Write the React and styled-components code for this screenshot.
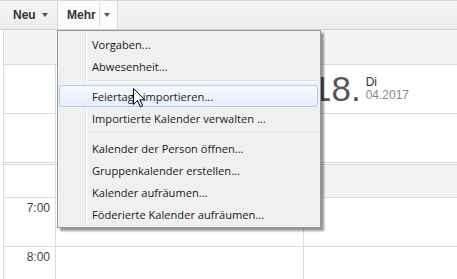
import React from "react";
import styled, { createGlobalStyle } from "styled-components";

const GlobalStyle = createGlobalStyle`
  html, body {
    margin: 0;
    padding: 0;
    background: #fff;
  }
  * {
    box-sizing: border-box;
  }
`;

const MENU_GROUPS = [
  ["Vorgaben...", "Abwesenheit..."],
  ["Feiertage importieren...", "Importierte Kalender verwalten ..."],
  [
    "Kalender der Person öffnen...",
    "Gruppenkalender erstellen...",
    "Kalender aufräumen...",
    "Föderierte Kalender aufräumen...",
  ],
];

const HOVERED = "Feiertage importieren...";

const ROWS = [
  { key: "date", height: 49 },
  { key: "allday", height: 51, double: true },
  { key: "h6", height: 33, shade: true },
  { key: "h7", height: 49, label: "7:00" },
  { key: "h8", height: 49, label: "8:00" },
];

const App = () => {
  return (
    <Page>
      <GlobalStyle />
      <Toolbar>
        <ToolButton>
          <ButtonLabel>Neu</ButtonLabel>
          <Caret />
        </ToolButton>
        <SplitButton>
          <ButtonLabel>Mehr</ButtonLabel>
          <SplitDivider />
          <CaretBox>
            <Caret />
          </CaretBox>
        </SplitButton>
      </Toolbar>

      <Calendar>
        <HeaderBar />
        <Grid>
          {ROWS.map((row) => (
            <React.Fragment key={row.key}>
              <Cell $height={row.height} $double={row.double}>
                {row.label && <TimeLabel>{row.label}</TimeLabel>}
              </Cell>
              <Cell $height={row.height} $double={row.double} />
              <Cell
                $height={row.height}
                $double={row.double}
                $shade={row.shade}
                $last
              >
                {row.key === "date" && (
                  <DateHead>
                    <DayNumber>18.</DayNumber>
                    <DateMeta>
                      <Weekday>Di</Weekday>
                      <MonthYear>04.2017</MonthYear>
                    </DateMeta>
                  </DateHead>
                )}
              </Cell>
            </React.Fragment>
          ))}
        </Grid>
      </Calendar>

      <Menu>
        {MENU_GROUPS.map((group, gi) => (
          <React.Fragment key={gi}>
            {gi > 0 && <Separator />}
            {group.map((item) => (
              <MenuItem key={item} $hover={item === HOVERED}>
                {item}
              </MenuItem>
            ))}
          </React.Fragment>
        ))}
      </Menu>

      <Pointer width="13" height="20" viewBox="0 0 13 20">
        <path
          d="M0.5 0.5 V16.5 L4.5 12.7 L7.3 18.8 L9.6 17.8 L6.9 11.8 H11.8 Z"
          fill="#fff"
          stroke="#000"
          strokeWidth="1"
          strokeLinejoin="miter"
        />
      </Pointer>
    </Page>
  );
};

const Page = styled.div`
  position: relative;
  width: 457px;
  height: 279px;
  overflow: hidden;
  background: #fff;
  font-family: "Liberation Sans", Arial, sans-serif;
`;

const Toolbar = styled.div`
  display: flex;
  height: 30px;
  border-top: 1px solid #d6d6d6;
  border-bottom: 1px solid #cfcfcf;
  background: linear-gradient(#f5f5f5, #ececec);
`;

const ToolButton = styled.div`
  display: flex;
  align-items: center;
  gap: 6px;
  width: 57px;
  padding-left: 13px;
`;

const SplitButton = styled.div`
  display: flex;
  align-items: stretch;
  width: 61px;
  padding-left: 9px;
  background: #fcfcfc;
  border-left: 1px solid #d8d8d8;
  border-right: 1px solid #d8d8d8;

  & > span {
    display: flex;
    align-items: center;
    padding-right: 3px;
  }
`;

const ButtonLabel = styled.span`
  font-size: 12px;
  font-weight: bold;
  color: #333;
`;

const SplitDivider = styled.div`
  width: 1px;
  margin: 1px 0;
  background: #e0e0e0;
`;

const CaretBox = styled.div`
  display: flex;
  align-items: center;
  padding-left: 4px;
`;

const Caret = styled.i`
  display: block;
  width: 0;
  height: 0;
  border-left: 3.5px solid transparent;
  border-right: 3.5px solid transparent;
  border-top: 4px solid #555;
`;

const Calendar = styled.div`
  margin-left: 3px;
  border-left: 1px solid #dcdcdc;
`;

const HeaderBar = styled.div`
  height: 35px;
  background: #f4f4f4;
  border-bottom: 1px solid #dadada;
`;

const Grid = styled.div`
  display: grid;
  grid-template-columns: 52px 248px 1fr;
`;

const Cell = styled.div`
  height: ${(p) => p.$height}px;
  background: ${(p) => (p.$shade ? "#f2f2f2" : "#fff")};
  border-right: ${(p) => (p.$last ? "none" : "1px solid #dcdcdc")};
  border-bottom: ${(p) =>
    p.$double ? "3px double #d6d6d6" : "1px solid #dcdcdc"};
`;

const TimeLabel = styled.div`
  padding: 3px 5px 0 0;
  text-align: right;
  font-size: 12px;
  color: #444;
`;

const DateHead = styled.div`
  display: flex;
  align-items: flex-start;
  gap: 5px;
  padding: 7px 0 0 8px;
`;

const DayNumber = styled.span`
  font-size: 35px;
  line-height: 34px;
  color: #555;
`;

const DateMeta = styled.div`
  display: flex;
  flex-direction: column;
  padding-top: 4px;
  font-size: 12px;
  line-height: 13px;
`;

const Weekday = styled.span`
  color: #333;
`;

const MonthYear = styled.span`
  color: #888;
`;

const Menu = styled.div`
  position: absolute;
  left: 57px;
  top: 30px;
  width: 264px;
  padding: 2px 0;
  border: 1px solid #979797;
  background: linear-gradient(
      to right,
      transparent 27px,
      #e2e3e3 27px,
      #e2e3e3 28px,
      #ffffff 28px,
      #ffffff 29px,
      transparent 29px
    ),
    #f0f0f0;
  box-shadow: 3px 3px 2px rgba(0, 0, 0, 0.4);
  font-family: "Open Sans", "Noto Sans", sans-serif;
  font-size: 11.1px;
  color: #1a1a1a;
`;

const MenuItem = styled.div`
  display: flex;
  align-items: center;
  height: 22px;
  margin: 0 2px 0 1px;
  padding-left: 32px;
  border: 1px solid ${(p) => (p.$hover ? "#aecbf0" : "transparent")};
  border-radius: 3px;
  background: ${(p) =>
    p.$hover ? "linear-gradient(#f6f9fe, #e6effb)" : "transparent"};
  white-space: nowrap;
`;

const Separator = styled.div`
  height: 8px;
  margin: 0 2px 0 30px;
  display: flex;
  flex-direction: column;
  justify-content: center;

  &::before {
    content: "";
    border-top: 1px solid #e0e0e0;
    border-bottom: 1px solid #ffffff;
  }
`;

const Pointer = styled.svg`
  position: absolute;
  left: 133px;
  top: 88px;
`;

export default App;
